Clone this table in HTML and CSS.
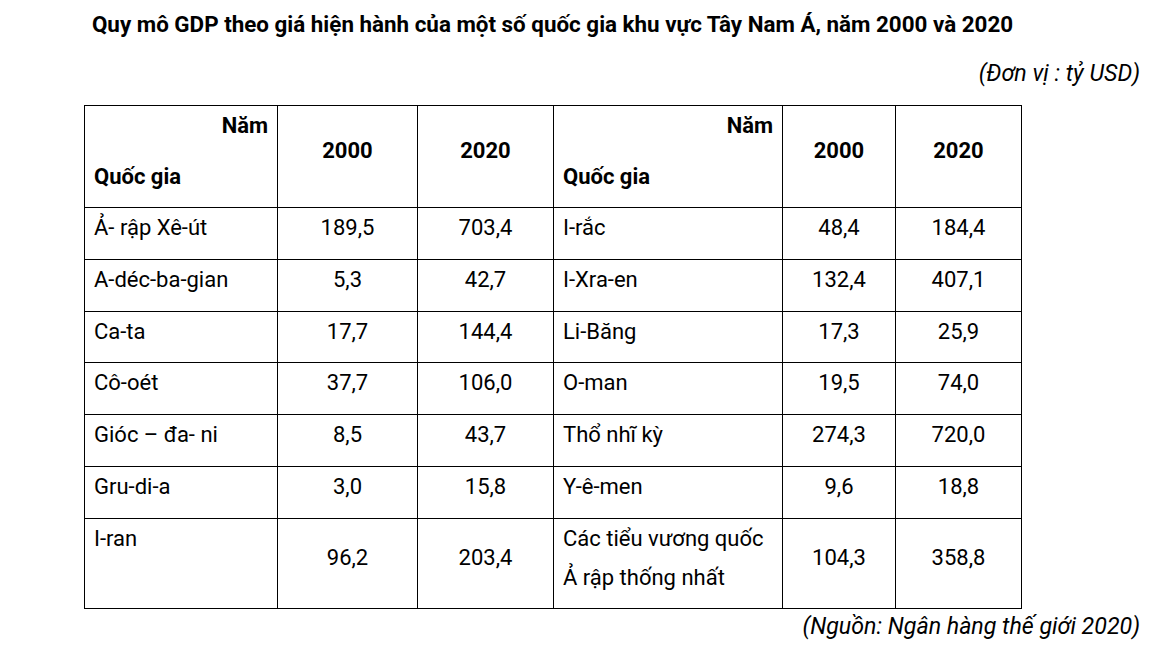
FILE: index.html
```html
<!DOCTYPE html>
<html lang="vi">
<head>
<meta charset="utf-8">
<title>Quy mô GDP Tây Nam Á</title>
<link rel="stylesheet" href="styles.css">
</head>
<body>
<div class="page">
  <h1 class="title">Quy mô GDP theo giá hiện hành của một số quốc gia khu vực Tây Nam Á, năm 2000 và 2020</h1>
  <p class="note unit">(Đơn vị : tỷ USD)</p>
  <table class="gdp">
    <colgroup>
      <col class="c-name1">
      <col class="c-num1">
      <col class="c-num2">
      <col class="c-name2">
      <col class="c-num3">
      <col class="c-num4">
    </colgroup>
    <thead>
      <tr>
        <th class="corner"><div class="yr">Năm</div><div class="ctry">Quốc gia</div></th>
        <th class="num">2000</th>
        <th class="num">2020</th>
        <th class="corner"><div class="yr">Năm</div><div class="ctry">Quốc gia</div></th>
        <th class="num">2000</th>
        <th class="num">2020</th>
      </tr>
    </thead>
    <tbody>
      <tr><td class="name">Ả- rập Xê-út</td><td class="num">189,5</td><td class="num">703,4</td><td class="name">I-rắc</td><td class="num">48,4</td><td class="num">184,4</td></tr>
      <tr><td class="name">A-déc-ba-gian</td><td class="num">5,3</td><td class="num">42,7</td><td class="name">I-Xra-en</td><td class="num">132,4</td><td class="num">407,1</td></tr>
      <tr><td class="name">Ca-ta</td><td class="num">17,7</td><td class="num">144,4</td><td class="name">Li-Băng</td><td class="num">17,3</td><td class="num">25,9</td></tr>
      <tr><td class="name">Cô-oét</td><td class="num">37,7</td><td class="num">106,0</td><td class="name">O-man</td><td class="num">19,5</td><td class="num">74,0</td></tr>
      <tr><td class="name">Gióc – đa- ni</td><td class="num">8,5</td><td class="num">43,7</td><td class="name">Thổ nhĩ kỳ</td><td class="num">274,3</td><td class="num">720,0</td></tr>
      <tr><td class="name">Gru-di-a</td><td class="num">3,0</td><td class="num">15,8</td><td class="name">Y-ê-men</td><td class="num">9,6</td><td class="num">18,8</td></tr>
      <tr><td class="name">I-ran</td><td class="num">96,2</td><td class="num">203,4</td><td class="name">Các tiểu vương quốc<br>Ả rập thống nhất</td><td class="num">104,3</td><td class="num">358,8</td></tr>
    </tbody>
  </table>
  <p class="note source">(Nguồn: Ngân hàng thế giới 2020)</p>
</div>
</body>
</html>
```
FILE: styles.css
```css
html, body {
  margin: 0;
  padding: 0;
  background: #ffffff;
}

body {
  font-family: Roboto, "Liberation Sans", Arial, sans-serif;
  color: #000000;
}

.page {
  padding: 8.5px 32px 0 84px;
}

.title {
  width: 937px;
  margin: 0;
  font-size: 22.4px;
  font-weight: 700;
  line-height: 30px;
  text-align: center;
}

.note {
  margin: 0;
  font-size: 23.2px;
  font-style: italic;
  line-height: 30px;
  text-align: right;
}

.unit {
  margin-top: 19px;
}

.source {
  margin-top: 2px;
}

.gdp {
  margin-top: 17.5px;
  width: 937px;
  table-layout: fixed;
  border-collapse: collapse;
  font-size: 22px;
  line-height: 39px;
}

.c-name1 { width: 193px; }
.c-num1 { width: 140px; }
.c-num2 { width: 136px; }
.c-name2 { width: 229px; }
.c-num3 { width: 113px; }
.c-num4 { width: 126px; }

.gdp th,
.gdp td {
  border: 1px solid #000000;
  padding: 0 9px 11.7px 9px;
  vertical-align: middle;
}

.gdp th {
  font-weight: 700;
}

.gdp .num {
  text-align: center;
}

.gdp .name {
  text-align: left;
  vertical-align: top;
}

.corner {
  vertical-align: top;
}

.corner .yr {
  text-align: right;
  margin-bottom: 11.7px;
}

.corner .ctry {
  text-align: left;
}
```
